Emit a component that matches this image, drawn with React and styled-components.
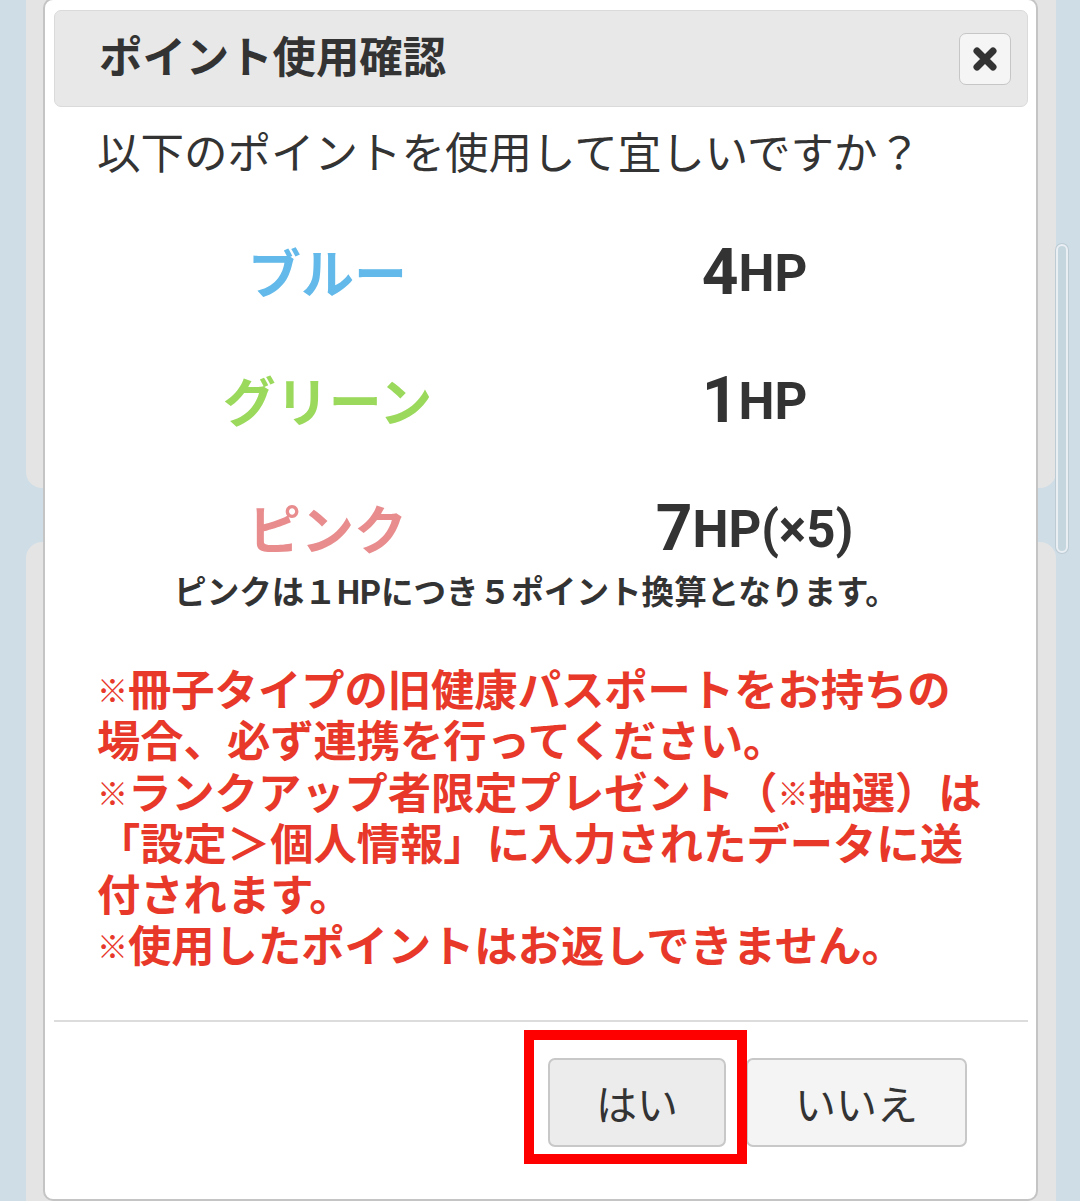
import React from "react";
import styled, { createGlobalStyle } from "styled-components";

const GlobalStyle = createGlobalStyle`
  html, body {
    margin: 0;
    padding: 0;
    background: #cfdde6;
    overflow: hidden;
  }
  body {
    font-family: Roboto, "Noto Sans CJK JP", sans-serif;
    color: #333;
  }
  * { box-sizing: border-box; }
`;

const Page = styled.div`
  position: relative;
  height: 1201px;
  overflow: hidden;
  padding: 0 24px 0 26px;
  display: flex;
  flex-direction: column;
  gap: 54px;
`;

const Card = styled.div`
  background: #e4e4e4;
  border-radius: 16px;
  height: ${(p) => p.$h}px;
  margin-top: ${(p) => p.$mt || 0}px;
  flex-shrink: 0;
`;

const ScrollThumb = styled.div`
  position: absolute;
  left: 1056px;
  top: 244px;
  width: 12px;
  height: 309px;
  border-radius: 6px;
  background: #c6d6df;
  border: 2px solid #e9eff3;
  box-shadow: 0 0 0 1px #bccbd4;
`;

const Dialog = styled.div`
  position: absolute;
  left: 43px;
  top: -2px;
  width: 995px;
  background: #fff;
  border: 2px solid #c4c4c4;
  border-radius: 10px;
  padding: 10px 8px 52px 9px;
`;

const TitleBar = styled.div`
  height: 97px;
  background: #e8e8e8;
  border: 1px solid #dadada;
  border-radius: 7px;
  display: flex;
  align-items: center;
  justify-content: space-between;
  padding: 0 16px 0 44px;
`;

const Title = styled.h1`
  margin: 0;
  font-size: 43.4px;
  font-weight: 700;
  line-height: 52px;
  color: #333;
`;

const CloseButton = styled.button`
  width: 52px;
  height: 52px;
  border: 1px solid #c6c6c6;
  border-radius: 7px;
  background: #f5f5f5;
  display: flex;
  align-items: center;
  justify-content: center;
  padding: 0;
`;

const Body = styled.div`
  padding: 22px 43px 0 43px;
`;

const Question = styled.p`
  margin: 0;
  font-size: 43.5px;
  line-height: 52px;
  font-weight: 400;
  color: #333;
`;

const PointTable = styled.div`
  width: 854px;
  margin: 45px auto 0;
  display: grid;
  grid-template-columns: 1fr 1fr;
  grid-auto-rows: 90px;
  row-gap: 38px;
`;

const Label = styled.div`
  display: flex;
  align-items: center;
  justify-content: center;
  font-size: 53px;
  font-weight: 700;
  color: ${(p) => p.$color};
`;

const Value = styled.div`
  display: flex;
  align-items: center;
  justify-content: center;
  font-weight: 700;
  color: #333;
  font-size: 51px;
  line-height: 1;
  padding-top: 4px;
`;

const Big = styled.span`
  font-size: 64px;
`;

const Note = styled.p`
  margin: 1px 0 0;
  text-align: center;
  font-size: 32.6px;
  line-height: 40px;
  font-weight: 700;
  color: #333;
  transform: translateX(-5px);
`;

const Warning = styled.p`
  margin: 53px 0 0;
  font-size: 43.3px;
  line-height: 51.3px;
  font-weight: 700;
  color: #e8382a;
  white-space: nowrap;
`;

const Mark = styled.span`
  font-size: 31px;
  vertical-align: 4px;
  letter-spacing: 0;
`;

const Divider = styled.hr`
  margin: 46px 0 0;
  border: 0;
  height: 2px;
  background: #dcdcdc;
`;

const Footer = styled.div`
  display: flex;
  justify-content: flex-end;
  gap: 20px;
  padding: 36px 61px 0 0;
`;

const Highlight = styled.div`
  position: relative;
`;

const Marker = styled.div`
  position: absolute;
  left: -24px;
  top: -28px;
  right: -21px;
  bottom: -17px;
  border: 10px solid #ff0000;
  pointer-events: none;
`;

const Button = styled.button`
  height: 89px;
  padding: 0 ${(p) => (p.$active ? 46 : 47)}px;
  border: 2px solid #c8c8c8;
  border-radius: 7px;
  background: ${(p) => (p.$active ? "#ececec" : "#f4f4f4")};
  font-family: Roboto, "Noto Sans CJK JP", sans-serif;
  font-size: 41px;
  font-weight: 400;
  color: #333;
`;

const CloseIcon = () => (
  <svg width="26" height="26" viewBox="0 0 26 26">
    <path
      d="M5 5 L21 21 M21 5 L5 21"
      stroke="#333"
      strokeWidth="7"
      strokeLinecap="round"
      fill="none"
    />
  </svg>
);

const points = [
  { label: "ブルー", color: "#62b9ea", num: "4", rest: "HP" },
  { label: "グリーン", color: "#9bd95c", num: "1", rest: "HP" },
  { label: "ピンク", color: "#e88c8e", num: "7", rest: "HP(×5)" },
];

export default function App() {
  return (
    <>
      <GlobalStyle />
      <Page>
        <Card $h={508} $mt={-20} />
        <Card $h={700} />
        <ScrollThumb />
        <Dialog>
          <TitleBar>
            <Title>ポイント使用確認</Title>
            <CloseButton aria-label="close">
              <CloseIcon />
            </CloseButton>
          </TitleBar>
          <Body>
            <Question>以下のポイントを使用して宜しいですか？</Question>
            <PointTable>
              {points.map((p) => (
                <React.Fragment key={p.label}>
                  <Label $color={p.color}>{p.label}</Label>
                  <Value>
                    <Big>{p.num}</Big>
                    {p.rest}
                  </Value>
                </React.Fragment>
              ))}
            </PointTable>
            <Note>ピンクは１HPにつき５ポイント換算となります。</Note>
            <Warning>
              <Mark>※</Mark>冊子タイプの旧健康パスポートをお持ちの
              <br />
              場合、必ず連携を行ってください。
              <br />
              <Mark>※</Mark>ランクアップ者限定プレゼント（<Mark>※</Mark>抽選）は
              <br />
              「設定＞個人情報」に入力されたデータに送
              <br />
              付されます。
              <br />
              <Mark>※</Mark>使用したポイントはお返しできません。
            </Warning>
          </Body>
          <Divider />
          <Footer>
            <Highlight>
              <Button $active>はい</Button>
              <Marker />
            </Highlight>
            <Button>いいえ</Button>
          </Footer>
        </Dialog>
      </Page>
    </>
  );
}
